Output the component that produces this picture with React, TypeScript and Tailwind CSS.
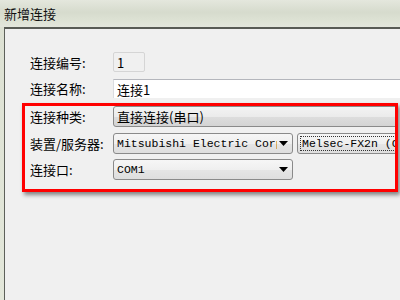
import React from "react";

const cjk = '"Noto Sans CJK SC", "Noto Sans", sans-serif';
const mono = '"Liberation Mono", "Noto Sans CJK SC", monospace';

function Arrow() {
  return (
    <svg width="9" height="5" viewBox="0 0 9 5" className="shrink-0">
      <path d="M0 0 H9 L4.5 5 Z" fill="#000" />
    </svg>
  );
}

function Label({ children }: { children: React.ReactNode }) {
  return (
    <div className="w-[83px] shrink-0 text-[13px] leading-none text-black" style={{ fontFamily: cjk }}>
      {children}
    </div>
  );
}

export default function App() {
  return (
    <div className="w-[400px] h-[300px] overflow-hidden flex flex-col bg-[#dfe3d6]">
      {/* title bar */}
      <div className="h-[27px] shrink-0 flex items-center pl-[4px] bg-[linear-gradient(180deg,#e4e7dd_0%,#d6dbcd_45%,#dde2d4_75%,#e3e6dc_100%)]">
        <span className="text-[13px] leading-none text-[#111] pb-[1px]" style={{ fontFamily: cjk }}>
          新增连接
        </span>
      </div>
      <div className="flex flex-1 min-h-0">
        <div className="w-[4px] shrink-0 bg-[linear-gradient(180deg,#dde1d3,#e3e7da)]" />
        <div className="flex-1 border-t-2 border-l border-t-[#585b55] border-l-[#5d605a] bg-[#f0f0f0] flex flex-col">
          {/* row 1 */}
          <div className="flex items-center pl-[25px] mt-[23px] h-[20px]">
            <Label>连接编号:</Label>
            <div
              className="w-[32px] h-[20px] border border-[#d5d5d5] rounded-[2px] bg-[#f0f0f0] flex items-center pl-[3px] text-[13px] leading-none"
              style={{ fontFamily: cjk }}
            >
              1
            </div>
          </div>
          {/* row 2 */}
          <div className="flex items-center pl-[25px] mt-[7px] h-[19px]">
            <Label>连接名称:</Label>
            <div
              className="flex-1 h-[19px] border-t border-l border-t-[#b4b6bc] border-l-[#dadce0] bg-white flex items-center pl-[3px] text-[13px] leading-none"
              style={{ fontFamily: cjk }}
            >
              连接1
            </div>
          </div>
          {/* red highlight box */}
          <div className="ml-[17px] mt-[5px] w-[376px] h-[89px] border-[3px] border-[#ff0000] overflow-hidden shadow-[2px_3px_4px_rgba(0,0,0,0.45)] flex flex-col pl-[5px]">
            {/* row 3 */}
            <div className="flex items-center h-[21px]">
              <Label>连接种类:</Label>
              <div
                className="w-[300px] shrink-0 h-[21px] border border-[#8a8a8a] rounded-[3px] bg-[linear-gradient(180deg,#f3f3f3_0%,#ebebeb_50%,#dddddd_52%,#d4d4d4_100%)] flex items-center pl-[3px] text-[13px] leading-none"
                style={{ fontFamily: cjk }}
              >
                直接连接(串口)
              </div>
            </div>
            {/* row 4 */}
            <div className="flex items-center h-[21px] mt-[6px]">
              <Label>装置/服务器:</Label>
              <div className="w-[180px] shrink-0 h-[21px] border border-[#8a8a8a] rounded-[3px] bg-[linear-gradient(180deg,#f6f6f6_0%,#efefef_50%,#e5e5e5_52%,#dedede_100%)] flex items-center pl-[3px] pr-[4px]">
                <div
                  className="flex-1 overflow-hidden whitespace-nowrap text-[11.5px] leading-none text-black"
                  style={{ fontFamily: mono }}
                >
                  Mitsubishi Electric Corp
                </div>
                <div className="w-[2px] shrink-0" />
                <Arrow />
              </div>
              <div className="w-[200px] shrink-0 ml-[4px] h-[21px] border border-[#8a8a8a] rounded-[3px] bg-[linear-gradient(180deg,#f6f6f6_0%,#efefef_50%,#e5e5e5_52%,#dedede_100%)] flex items-center pl-[2px]">
                <div
                  className="h-[15px] border border-dotted border-[#333] flex items-center pl-[1px] pr-[40px] whitespace-nowrap text-[11.5px] leading-none text-black"
                  style={{ fontFamily: mono }}
                >
                  Melsec-FX2n (CPU)
                </div>
              </div>
            </div>
            {/* row 5 */}
            <div className="flex items-center h-[21px] mt-[5px]">
              <Label>连接口:</Label>
              <div className="w-[180px] shrink-0 h-[21px] border border-[#8a8a8a] rounded-[3px] bg-[linear-gradient(180deg,#f6f6f6_0%,#efefef_50%,#e5e5e5_52%,#dedede_100%)] flex items-center pl-[3px] pr-[4px]">
                <div
                  className="flex-1 overflow-hidden whitespace-nowrap text-[11.5px] leading-none text-black"
                  style={{ fontFamily: mono }}
                >
                  COM1
                </div>
                <Arrow />
              </div>
            </div>
          </div>
        </div>
      </div>
    </div>
  );
}
